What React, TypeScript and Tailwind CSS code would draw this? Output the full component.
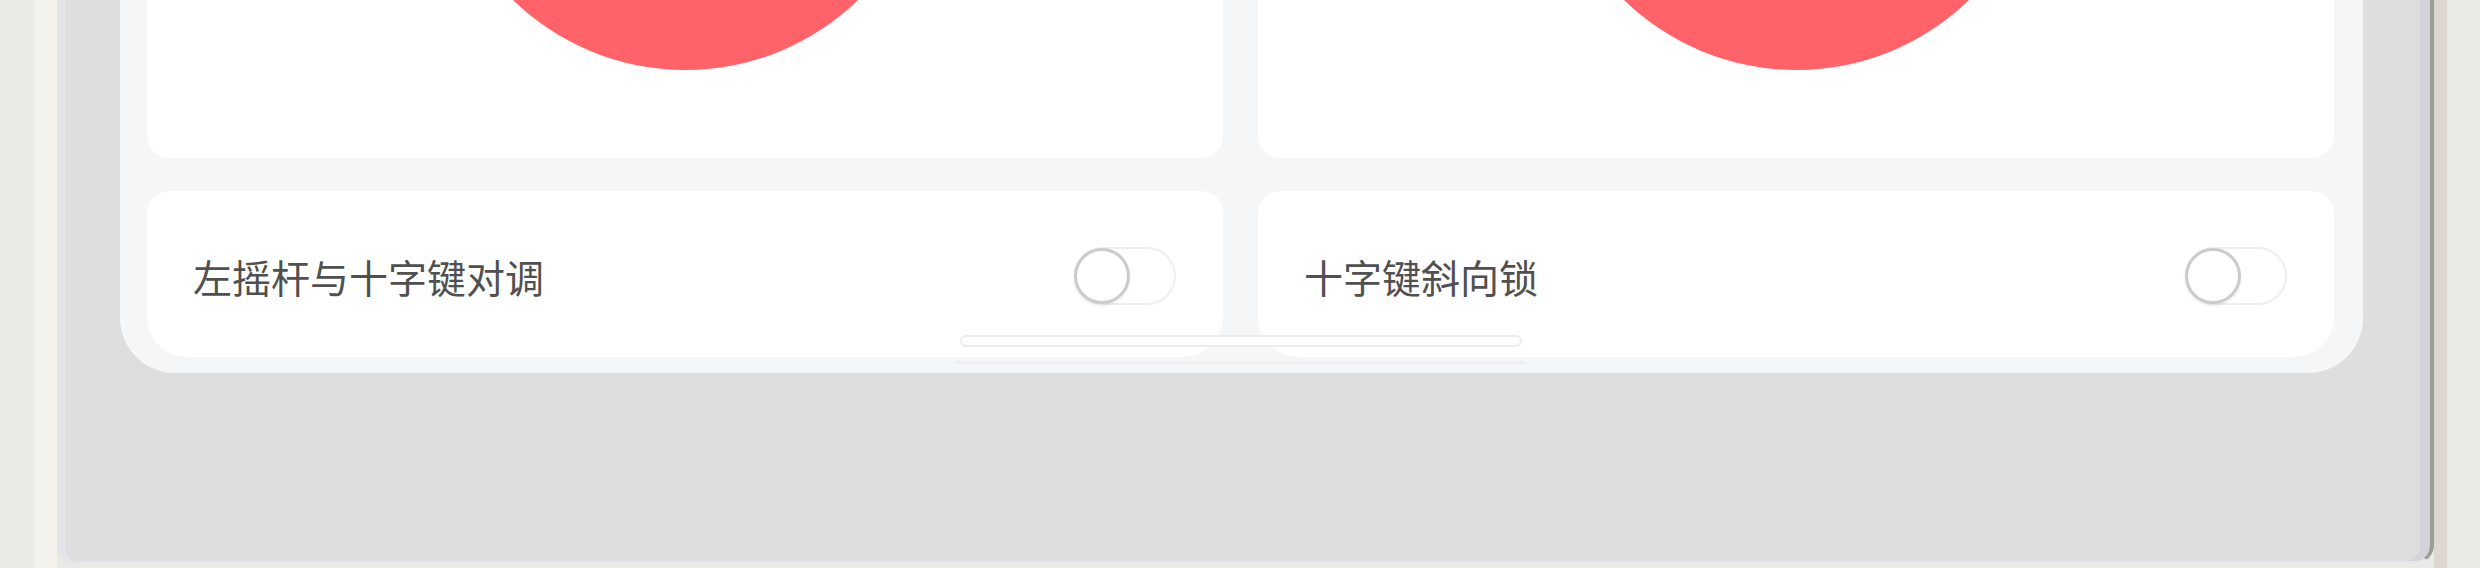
import React from "react";

const options = [
  { id: "swap", label: "左摇杆与十字键对调" },
  { id: "lock", label: "十字键斜向锁" },
];

function Toggle() {
  return (
    <div className="relative h-[58px] w-[102px] shrink-0 rounded-full border-2 border-[#efeff0] bg-white">
      <div className="absolute -left-[2px] -top-[1px] h-[56px] w-[56px] rounded-full border-[3px] border-[#cbcbcb] bg-white shadow-[0_2px_3px_rgba(0,0,0,0.08)]" />
    </div>
  );
}

function Screen() {
  return (
    <div className="relative flex h-[373px] w-[2243px] shrink-0 flex-col overflow-hidden rounded-b-[55px] bg-[#f5f6f8] pl-[27px] pr-[29px]">
      {/* joystick preview cards, cut off at the top */}
      <div className="grid h-[158px] grid-cols-2 gap-x-[35px]">
        {options.map((o) => (
          <div
            key={o.id}
            className="flex justify-center overflow-hidden rounded-b-[22px] bg-white"
          >
            <div className="-mt-[425px] h-[495px] w-[495px] shrink-0 rounded-full bg-[#fe636a]" />
          </div>
        ))}
      </div>

      {/* switch rows */}
      <div className="mt-[33px] grid h-[166px] grid-cols-2 gap-x-[35px]">
        {options.map((o) => (
          <div
            key={o.id}
            className="flex items-center justify-between rounded-t-[22px] rounded-b-[40px] bg-white pl-[46px] pr-[47px] pt-[4px]"
          >
            <span className="text-[39px] leading-none text-[#505050]">
              {o.label}
            </span>
            <Toggle />
          </div>
        ))}
      </div>

      {/* home indicator */}
      <div className="absolute bottom-[26px] left-[840px] h-[12px] w-[562px] rounded-full border-2 border-[#ededf0] bg-white" />
      <div className="absolute bottom-[9px] left-[836px] h-[3px] w-[570px] rounded-full bg-[#eeeef1]" />
    </div>
  );
}

export default function App() {
  return (
    <div className="flex h-[568px] w-[2480px] overflow-hidden bg-[#e9e9e5] font-['Noto_Sans_CJK_SC',sans-serif]">
      <div className="flex h-full w-[57px] shrink-0">
        <div className="w-[35px] bg-[#ebeae5]" />
        <div className="w-[22px] bg-[#f3f2ec]" />
      </div>
      <div className="flex h-[563px] w-[2377px] shrink-0 items-start rounded-b-[18px] border-b-2 border-l-[8px] border-r-[4px] border-b-[#e6e6e9] border-l-[#e4e4e9] border-r-[#9b9b97] bg-[#dedede] pl-[55px] shadow-[inset_-10px_0_0_#d3d3d9]">
        <Screen />
      </div>
      <div className="w-[13px] shrink-0 bg-[#dcd7d1]" />
    </div>
  );
}
